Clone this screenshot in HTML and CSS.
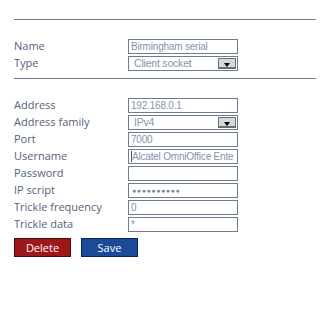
FILE: index.html
```html
<!DOCTYPE html>
<html lang="en">
<head>
  <meta charset="UTF-8" />
  <title>Serial port</title>
  <link rel="stylesheet" href="styles.css">
</head>
<body>
  <div class="panel">
    <hr class="rule rule-top" />

    <div class="form-grid">
      <label>Name</label>
      <div class="field">Birmingham serial</div>
      <label>Type</label>
      <div class="field select"><span>Client socket</span><span class="drop"></span></div>
    </div>

    <hr class="rule rule-mid" />

    <div class="form-grid">
      <label>Address</label>
      <div class="field">192.168.0.1</div>
      <label>Address family</label>
      <div class="field select"><span>IPv4</span><span class="drop"></span></div>
      <label>Port</label>
      <div class="field">7000</div>
      <label>Username</label>
      <div class="field"><span class="caret"></span>Alcatel OmniOffice Ente</div>
      <label>Password</label>
      <div class="field"></div>
      <label>IP script</label>
      <div class="field dots">&#9679;&#9679;&#9679;&#9679;&#9679;&#9679;&#9679;&#9679;&#9679;&#9679;</div>
      <label>Trickle frequency</label>
      <div class="field">0</div>
      <label>Trickle data</label>
      <div class="field">*</div>
    </div>

    <div class="buttons">
      <button class="btn btn-delete">Delete</button>
      <button class="btn btn-save">Save</button>
    </div>
  </div>
</body>
</html>
```

FILE: styles.css
```css
* {
  margin: 0;
  padding: 0;
  box-sizing: border-box;
}

body {
  background: #fff;
  font-family: 'Open Sans', 'DejaVu Sans', sans-serif;
}

.panel {
  padding: 19px 12px 0 14px;
  width: 328px;
}

.rule {
  border: none;
  border-top: 1px solid #6f7b8f;
  height: 0;
}

.rule-mid {
  margin-top: 7px;
}

.form-grid {
  display: grid;
  grid-template-columns: 114px 110px;
  grid-auto-rows: 15px;
  row-gap: 2px;
  margin-top: 19px;
}

.form-grid label {
  font-size: 11px;
  line-height: 14px;
  color: #56627a;
}

/* Input boxes */
.field {
  border: 1px solid #6f7b8f;
  font-family: 'Liberation Sans', Arial, sans-serif;
  font-size: 10px;
  line-height: 13px;
  color: #8592ab;
  padding-left: 2px;
  white-space: nowrap;
  overflow: hidden;
  letter-spacing: -0.2px;
}

.select {
  display: flex;
  justify-content: space-between;
  padding-left: 5px;
  font-size: 10.5px;
}

.drop {
  width: 18px;
  height: 11px;
  margin: 1px 1px 0 0;
  background: #d6d8dc;
  border: 1px solid #6b6f78;
  border-bottom-width: 2px;
  position: relative;
}

.drop::after {
  content: '';
  position: absolute;
  left: 5px;
  bottom: 0;
  border-left: 3px solid transparent;
  border-right: 3px solid transparent;
  border-top: 4px solid #000;
}

.caret {
  display: inline-block;
  width: 1px;
  height: 11px;
  background: #555;
  vertical-align: -2px;
}

.dots {
  font-size: 7px;
  letter-spacing: 0.6px;
  color: #7a86a0;
  line-height: 13px;
  padding-left: 3px;
}

.buttons {
  display: flex;
  gap: 10px;
  margin-top: 6px;
}

.btn {
  height: 19px;
  width: 57px;
  font-family: 'Open Sans', 'DejaVu Sans', sans-serif;
  font-size: 11px;
  color: #fff;
  cursor: pointer;
}

.btn-delete {
  background: #9e1719;
  border: 1px solid #4e0a0a;
}

.btn-save {
  background: #1a4a98;
  border: 1px solid #0b2456;
}
```
